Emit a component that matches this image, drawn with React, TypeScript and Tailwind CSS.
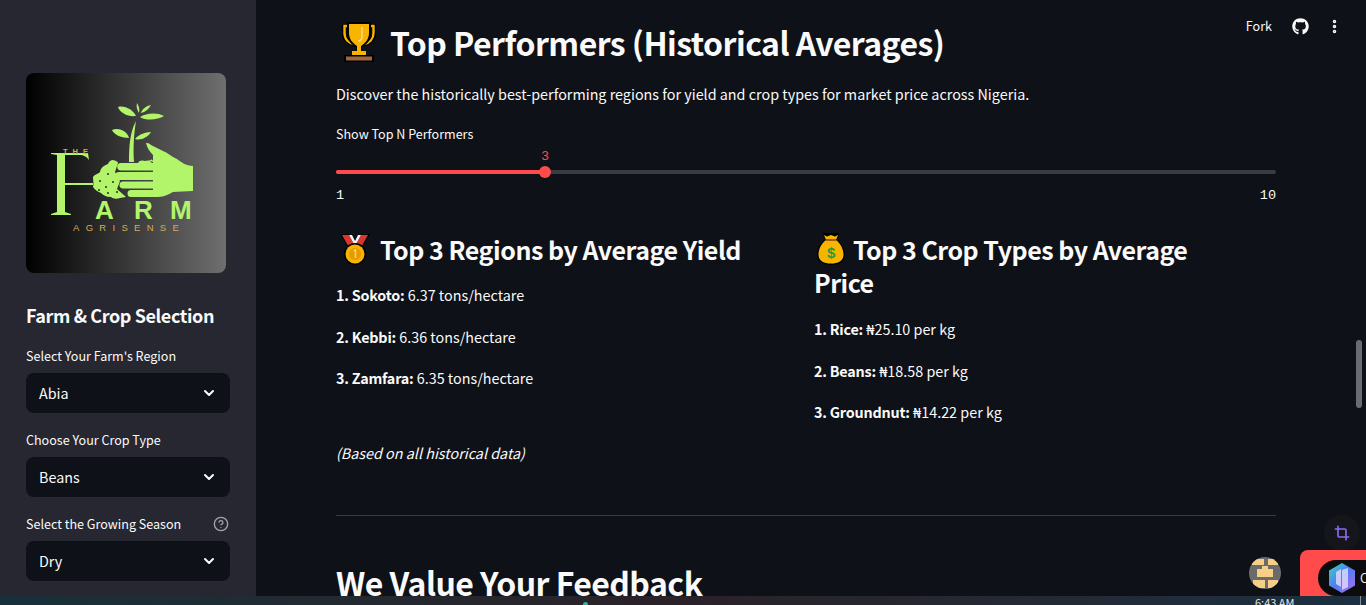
import { ChevronDown, CircleHelp, Crop, EllipsisVertical } from "lucide-react";
import { FaGithub } from "react-icons/fa";

const font = "font-['Noto_Sans_CJK_SC','Noto_Sans',sans-serif]";

function Trophy() {
  return (
    <svg width="34" height="40" viewBox="0 0 34 40" className="shrink-0">
      <path d="M7 4H2v7c0 6 4 10 10 11M27 4h5v7c0 6-4 10-10 11" fill="none" stroke="#000" strokeWidth="4.500" />
      <path d="M7 4H2.500v7c0 6 4 10 9.500 11M27 4h4.500v7c0 6-4 10-9.500 11" fill="none" stroke="#f7b500" strokeWidth="2.400" />
      <path d="M5 0h24v11c0 8-5 12-9 14v5h-6v-5c-4-2-9-6-9-14z" fill="#000" />
      <path d="M7 2h20v9c0 7-5 11-8 13v6h-4v-6c-3-2-8-6-8-13z" fill="#f7b500" />
      <path d="M20 5v9c0 3-1 5-4 5" fill="none" stroke="#ffd979" strokeWidth="1.600" />
      <path d="M10 29h14v4H10z" fill="#f7b500" />
      <path d="M2 33h30v7H2z" fill="#000" />
      <path d="M4 34.500h26v4H4z" fill="#a0673c" />
    </svg>
  );
}

function Medal() {
  return (
    <svg width="30" height="32" viewBox="0 0 30 32" className="shrink-0">
      <path d="M0 1h10l5 8 5-8h10L20 19H10z" fill="#000" />
      <path d="M2 2h7l6 11 6-11h7L19 18h-8z" fill="#d8362f" />
      <path d="M9 2h3l3 6 3-6h3l-6 11z" fill="#f3f3f3" />
      <circle cx="15" cy="21" r="11" fill="#000" />
      <circle cx="15" cy="21" r="9.500" fill="#f7b500" />
      <circle cx="15" cy="21" r="6" fill="#e59a00" />
      <path d="M13.500 18l2-1v8" fill="none" stroke="#ffd24a" strokeWidth="1.600" />
    </svg>
  );
}

function MoneyBag() {
  return (
    <svg width="28" height="32" viewBox="0 0 28 32" className="shrink-0">
      <path d="M6 0h16l-2 7c5 4 8 9 8 15 0 7-6 10-14 10S0 29 0 22c0-6 3-11 8-15z" fill="#000" />
      <path d="M7 2l3 1.500L14 2l4 1.500L21 2l-2 5c5 4 7.500 9 7.500 15 0 6-5.500 8.500-12.500 8.500S1.500 28 1.500 22c0-6 2.500-11 7.500-15z" fill="#f7b500" />
      <path d="M9 7h10" stroke="#9a5d16" strokeWidth="2" />
      <text x="14" y="25" textAnchor="middle" fontSize="15" fontWeight="700" fill="#1f9d3a" fontFamily="Liberation Sans">$</text>
    </svg>
  );
}

function Logo() {
  return (
    <div className="size-[200px] shrink-0 overflow-hidden rounded-lg bg-linear-to-r/srgb from-black to-[#6f6f6f]">
      <svg width="200" height="200" viewBox="0 0 200 200">
        <g fill="#b2f56b">
          {/* leaves */}
          <path d="M92 34c7-2 15 3 18 9-8 1-16-3-18-9z" />
          <path d="M111 30c2 3 3 7 2 10-2-3-3-7-2-10z" />
          <path d="M125 32c-2 4-6 7-10 8 1-4 5-7 10-8z" />
          <path d="M114 44c6-4 17-5 24-1-6 4-18 5-24 1z" />
          <path d="M86 57c7-3 15 1 17 8-7 0-15-3-17-8z" />
          <path d="M109 66c3-4 10-7 16-7-3 5-10 9-16 7z" />
          {/* stem */}
          <path d="M103 89c0-16 1-30 7-41-2 12-3 27-2 41z" />
          {/* F */}
          <path d="M25 80h37l1 7c-2-3-5-5-10-5H39v28h28v2H39v27l6 2v1H25v-1l6-2V82l-6-1z" />
          {/* soil */}
          <path d="M67 104c2-3 5-3 7-5 1-5 5-7 8-8 1-3 3-4 5-4 4 1 5 2 5 3l-3 9 5 9-3 8 9 8-6 1c-3 1-7 1-9-1-5 0-8-2-10-4-3-1-6-3-8-6 1-3 0-6 0-10z" />
          {/* fingers */}
          <path d="M95 90h32v7.500H95a3.750 3.750 0 0 1 0-7.500z" />
          <path d="M93 99h34v8H93a4 4 0 0 1 0-8z" />
          <path d="M97 108.500h30v7H97a3.500 3.500 0 0 1 0-7z" />
          <path d="M105 117h24v7h-24a3.500 3.500 0 0 1 0-7z" />
          {/* palm and thumb */}
          <path d="M120 70c1 0 3 0 5 2l12 6c5 2 9 6 14 8 4 3 9 7 16 7v25c-8 0-14 1-20 1-4 2-9 5-15 5h-5V89l-5-2h3c-1-1 2 0 2 1v-6c-3-3-6-7-7-12z" />
        </g>
        {/* clod peeking above the top finger */}
        <path d="M112 90c1-3 5-3 7-2 2-1 5-1 7 2z" fill="#b2f56b" />
        <g fill="#2a2a2a">
          <circle cx="74" cy="108" r="1" />
          <circle cx="82" cy="101" r="1" />
          <circle cx="80" cy="114" r="1" />
          <circle cx="87" cy="109" r="1" />
          <circle cx="73" cy="117" r="1" />
          <circle cx="82" cy="120" r="1" />
          <circle cx="91" cy="119" r="1" />
        </g>
        <text x="37" y="81" fontSize="7.500" fontWeight="700" letterSpacing="5" fill="#d3ad59" fontFamily="Liberation Sans">THE</text>
        <text x="69" y="146" fontSize="26" fontWeight="700" fill="#b2f56b" fontFamily="Liberation Sans">A</text>
        <text x="108" y="146" fontSize="26" fontWeight="700" fill="#b2f56b" fontFamily="Liberation Sans">R</text>
        <text x="144" y="146" fontSize="26" fontWeight="700" fill="#b2f56b" fontFamily="Liberation Sans">M</text>
        <text x="47" y="158" fontSize="9.500" letterSpacing="6.300" fill="#d3ad59" fontFamily="Liberation Sans">AGRISENSE</text>
      </svg>
    </div>
  );
}

function SelectBox({ label, value, help }: { label: string; value: string; help?: boolean }) {
  return (
    <div className="flex flex-col">
      <div className="flex h-[29px] items-start justify-between pr-[1px] text-[12.550px] leading-[24px] text-[#fafafa]">
        <span>{label}</span>
        {help && <CircleHelp size={16} className="mt-1 text-[#a3a3a8]" />}
      </div>
      <div className="flex h-10 items-center justify-between rounded-lg bg-[#0e1117] px-[13px] text-[14.350px] text-[#fafafa]">
        <span>{value}</span>
        <ChevronDown size={16} strokeWidth={3} />
      </div>
    </div>
  );
}

function Sidebar() {
  return (
    <aside className="flex h-full w-[256px] shrink-0 flex-col bg-[#262730] px-[26px] pt-[73px]">
      <Logo />
      <h2 className="mt-[28px] text-[18px] font-semibold leading-[28px] tracking-[-0.4px] text-[#fafafa]">Farm &amp; Crop Selection</h2>
      <div className="mt-[15px] flex flex-col gap-[15px]">
        <SelectBox label="Select Your Farm's Region" value="Abia" />
        <SelectBox label="Choose Your Crop Type" value="Beans" />
        <SelectBox label="Select the Growing Season" value="Dry" help />
      </div>
    </aside>
  );
}

function Stat({ name, value }: { name: string; value: string }) {
  return (
    <p className="mb-[17.500px] text-[14.350px] leading-[24px] text-[#fafafa]">
      <b className="font-semibold tracking-[-0.2px]">{name}</b> {value}
    </p>
  );
}

function Main() {
  return (
    <main className="flex h-full flex-1 flex-col overflow-hidden bg-[#0e1117] pl-[80px] pr-[90px] pt-[20px] text-[#fafafa]">
      <h1 className="flex h-[44px] items-center gap-[14px] pl-[6px] text-[32px] font-semibold leading-[44px] tracking-[-0.55px]">
        <Trophy />
        <span>Top Performers (Historical Averages)</span>
      </h1>
      <p className="mt-[18px] text-[14.350px] leading-[24px]">
        Discover the historically best-performing regions for yield and crop types for market price across Nigeria.
      </p>

      {/* slider */}
      <div className="mt-[16px]">
        <div className="text-[12.550px] leading-[24px]">Show Top N Performers</div>
        <div className="relative mt-[18px] h-[16px]">
          <div className="absolute left-0 right-0 top-[6px] h-1 rounded-full bg-[#3a3b44]" />
          <div className="absolute left-0 top-[6px] h-1 w-[209px] rounded-l-full bg-[#ff4b4b]" />
          <div className="absolute left-[203px] top-[2px] size-3 rounded-full bg-[#ff4b4b]" />
          <div className="absolute left-[205px] top-[-15px] font-['Liberation_Mono',monospace] text-[13.500px] leading-[16px] text-[#ff4b4b]">3</div>
        </div>
        <div className="mt-[8px] flex justify-between font-['Liberation_Mono',monospace] text-[13.500px] leading-[16px]">
          <span>1</span>
          <span>10</span>
        </div>
      </div>

      <div className="mt-[25px] grid grid-cols-[462px_462px] gap-x-[16px]">
        <div>
          <h3 className="flex h-[40px] items-center gap-[10px] pl-[4px] text-[25px] font-semibold leading-[33px] tracking-[-0.47px]">
            <Medal />
            <span>Top 3 Regions by Average Yield</span>
          </h3>
          <div className="mt-[14px]">
            <Stat name="1. Sokoto:" value="6.37 tons/hectare" />
            <Stat name="2. Kebbi:" value="6.36 tons/hectare" />
            <Stat name="3. Zamfara:" value="6.35 tons/hectare" />
          </div>
          <p className="mt-[50.500px] text-[14.350px] italic leading-[24px]">(Based on all historical data)</p>
        </div>
        <div>
          <h3 className="text-[25px] font-semibold leading-[33px] tracking-[-0.5px]">
            <span className="flex h-[40px] items-center gap-[8px] pl-[3px]">
              <MoneyBag />
              <span>Top 3 Crop Types by Average</span>
            </span>
            <span className="-mt-[3px] block">Price</span>
          </h3>
          <div className="mt-[18px]">
            <Stat name="1. Rice:" value="₦25.10 per kg" />
            <Stat name="2. Beans:" value="₦18.58 per kg" />
            <Stat name="3. Groundnut:" value="₦14.22 per kg" />
          </div>
        </div>
      </div>

      <hr className="mt-[50px] border-[#3a3b44]" />
      <h2 className="mt-[44px] text-[32px] font-semibold leading-[44px] tracking-[-0.55px]">We Value Your Feedback</h2>
    </main>
  );
}

export default function App() {
  return (
    <div className={`relative flex h-[605px] w-[1366px] flex-col overflow-hidden bg-[#0e1117] ${font}`}>
      <div className="flex h-[596px]">
        <Sidebar />
        <Main />
      </div>
      {/* desktop taskbar peeking in at the bottom */}
      <div className="relative h-[9px] bg-gradient-to-r from-[#18303a] via-[#2a2228] to-[#1b3040]">
        <div className="absolute left-[583px] top-[6px] size-[5px] rounded-full bg-[#2fb5a0]" />
        <div className="absolute left-[1255px] top-[-2px] whitespace-nowrap text-[11px] leading-[16px] text-[#e6e6e6]">6:43 AM</div>
        <div className="absolute left-[1360px] top-0 h-full w-px bg-[#8a8f96]" />
      </div>

      {/* streamlit toolbar */}
      <div className="absolute right-[23px] top-[16px] flex items-center gap-[17px] text-[12.550px] leading-[20px] text-[#fafafa]">
        <span className="mr-[3px]">Fork</span>
        <FaGithub size={17} />
        <EllipsisVertical size={17} strokeWidth={3} />
      </div>

      {/* page scrollbar */}
      <div className="absolute right-[4px] top-[340px] h-[68px] w-[6px] rounded-full bg-[#6a6c72]" />

      {/* floating widgets */}
      <div className="absolute left-[1324px] top-[515px] flex size-[36px] items-center justify-center rounded-full bg-[#14161b]">
        <Crop size={16} strokeWidth={2.500} className="text-[#8b6cf0]" />
      </div>
      <svg width="32" height="32" viewBox="0 0 32 32" className="absolute left-[1249px] top-[557px]">
        <clipPath id="avatar">
          <circle cx="16" cy="16" r="16" />
        </clipPath>
        <g clipPath="url(#avatar)">
          <rect width="32" height="32" fill="#6b6b6b" />
          <path d="M3 2h12v6H3zM19 2h10v6H19zM13 9h6v3h-6zM8 12h16v8H8zM4 23h12v8H4zM19 23h10v8H19z" fill="#f5cf86" />
        </g>
      </svg>
      <div className="absolute left-[1300px] top-[550px] h-[46px] w-[66px] rounded-tl-lg bg-[#ff4b4b]" />
      <div className="absolute left-[1318px] top-[560px] flex h-[36px] w-[48px] items-center gap-[5px] rounded-l-full bg-[#0c0c0f] pl-[11px]">
        <svg width="26" height="30" viewBox="0 0 26 30" className="shrink-0">
          <defs>
            <linearGradient id="gem" x1="0" y1="0" x2="1" y2="1">
              <stop offset="0" stopColor="#39d3c3" />
              <stop offset="0.5" stopColor="#4f7df0" />
              <stop offset="1" stopColor="#b36cf0" />
            </linearGradient>
          </defs>
          <path d="M13 0l13 7.500v15L13 30 0 22.500v-15z" fill="url(#gem)" />
          <path d="M7 9l5-3v18l-5-3zM13 7l6-2v19l-6 3z" fill="#e6dcff" fillOpacity="0.8" />
        </svg>
        <span className="text-[12.550px] leading-[20px] text-[#e8e8e8]">C</span>
      </div>
    </div>
  );
}
